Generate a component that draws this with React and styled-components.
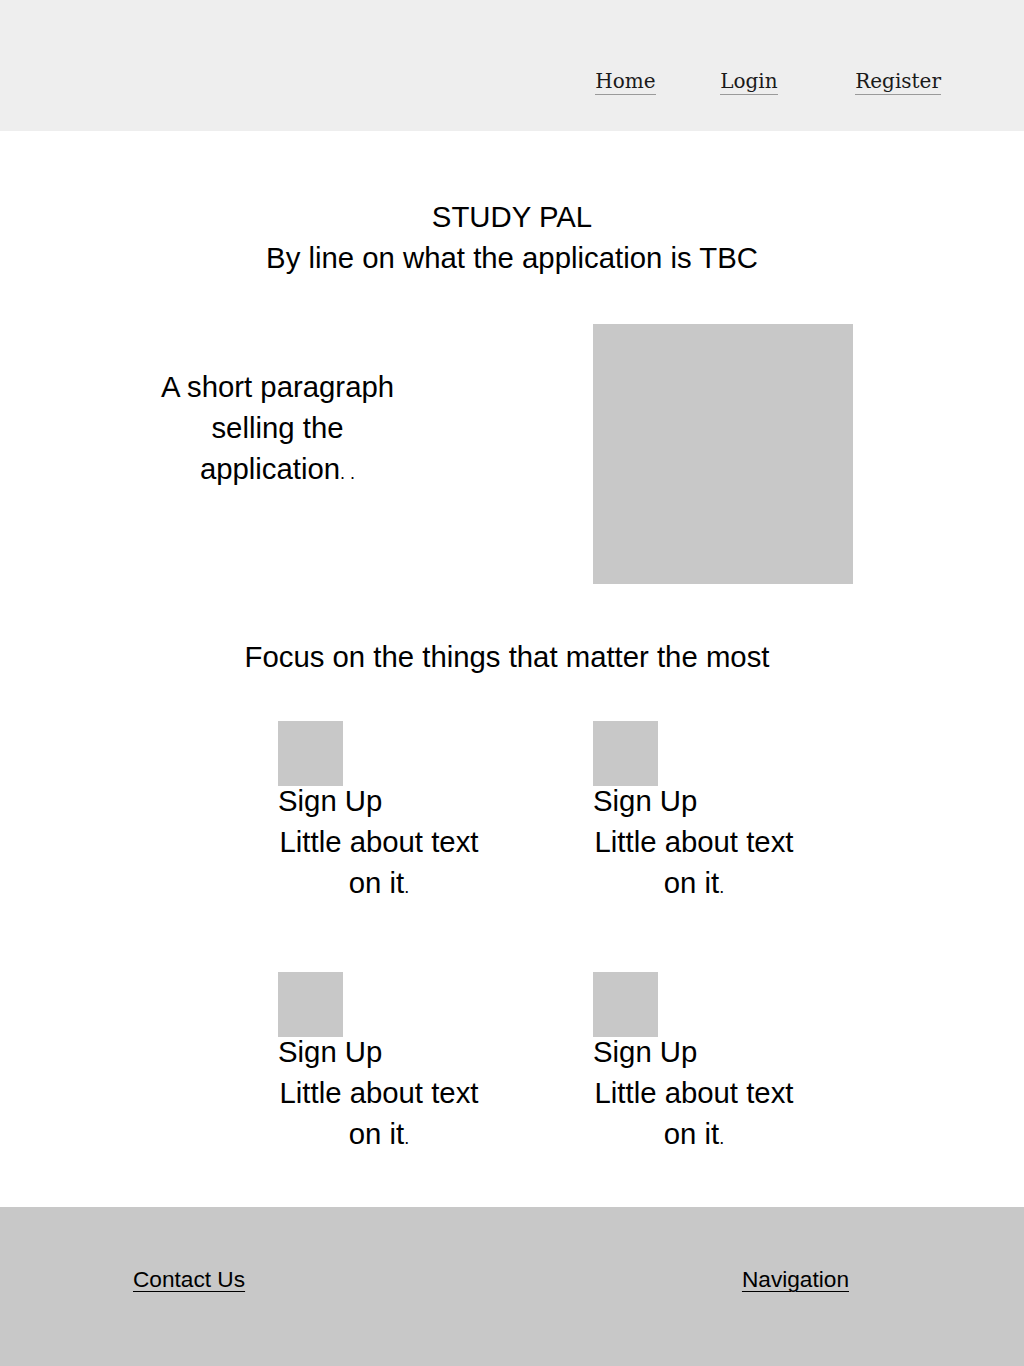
import React from "react";
import styled, { createGlobalStyle } from "styled-components";

const GlobalStyle = createGlobalStyle`
  body {
    margin: 0;
    background: #ffffff;
    color: #000000;
    font-family: "Liberation Sans", Arial, sans-serif;
  }
`;

const Page = styled.div`
  width: 1024px;
  min-height: 1366px;
  display: flex;
  flex-direction: column;
`;

const Header = styled.header`
  height: 131px;
  background-color: #eeeeee;
  display: flex;
  justify-content: flex-end;
  align-items: center;
  padding: 30px 83px 0 0;
  box-sizing: border-box;
`;

const NavItem = styled.a`
  width: ${(props) => (props.$w ? `${props.$w}px` : "auto")};
  font-family: "DejaVu Serif", "Liberation Serif", serif;
  font-size: 20px;
  color: #1a1a1a;
  text-decoration: none;

  span {
    border-bottom: 1px solid #9a9a9a;
    padding-bottom: 1px;
  }
`;

const Main = styled.main`
  flex: 1;
  padding: 65px 0 48px;
  font-size: 22pt;
  line-height: 41px;
`;

const Intro = styled.div`
  text-align: center;
  margin-bottom: 46px;
`;

const Hero = styled.section`
  display: grid;
  grid-template-columns: 315px 260px;
  column-gap: 158px;
  padding-left: 120px;
`;

const Blurb = styled.p`
  width: 250px;
  margin: 42px auto 0;
  text-align: center;
`;

const Placeholder = styled.div`
  width: ${(props) => props.$size}px;
  height: ${(props) => props.$size}px;
  background-color: #c8c8c8;
`;

const Small = styled.span`
  font-size: 18px;
`;

const Focus = styled.h2`
  margin: 52px 0 44px;
  font-size: inherit;
  font-weight: normal;
  text-align: center;
  padding-right: 10px;
`;

const Features = styled.section`
  display: grid;
  grid-template-columns: 315px 315px;
  row-gap: 64px;
  padding-left: 278px;
`;

const Card = styled.div`
  display: flex;
  flex-direction: column;
`;

const CardTitle = styled.div`
  line-height: 30px;
  margin-bottom: 5px;
`;

const CardText = styled.div`
  width: 200px;
  text-align: center;
  padding-left: 1px;
`;

const Footer = styled.footer`
  height: 159px;
  background-color: #c8c8c8;
  display: flex;
  justify-content: space-between;
  align-items: center;
  padding: 0 175px 14px 133px;
  box-sizing: border-box;
`;

const FooterLink = styled.a`
  font-size: 22.67px;
  color: #000;
  text-decoration: underline;
  text-underline-offset: 4px;
  text-decoration-thickness: 1px;
`;

const features = [1, 2, 3, 4];

export default function App() {
  return (
    <>
      <GlobalStyle />
      <Page>
        <Header>
          <NavItem $w={125}>
            <span>Home</span>
          </NavItem>
          <NavItem $w={135}>
            <span>Login</span>
          </NavItem>
          <NavItem>
            <span>Register</span>
          </NavItem>
        </Header>

        <Main>
          <Intro>
            <div>STUDY PAL</div>
            <div>By line on what the application is TBC</div>
          </Intro>

          <Hero>
            <Blurb>
              A short paragraph selling the application<Small>. .</Small>
            </Blurb>
            <Placeholder $size={260} />
          </Hero>

          <Focus>Focus on the things that matter the most</Focus>

          <Features>
            {features.map((f) => (
              <Card key={f}>
                <Placeholder $size={65} />
                <CardTitle>Sign Up</CardTitle>
                <CardText>
                  Little about text on it<Small>.</Small>
                </CardText>
              </Card>
            ))}
          </Features>
        </Main>

        <Footer>
          <FooterLink>Contact Us</FooterLink>
          <FooterLink>Navigation</FooterLink>
        </Footer>
      </Page>
    </>
  );
}
